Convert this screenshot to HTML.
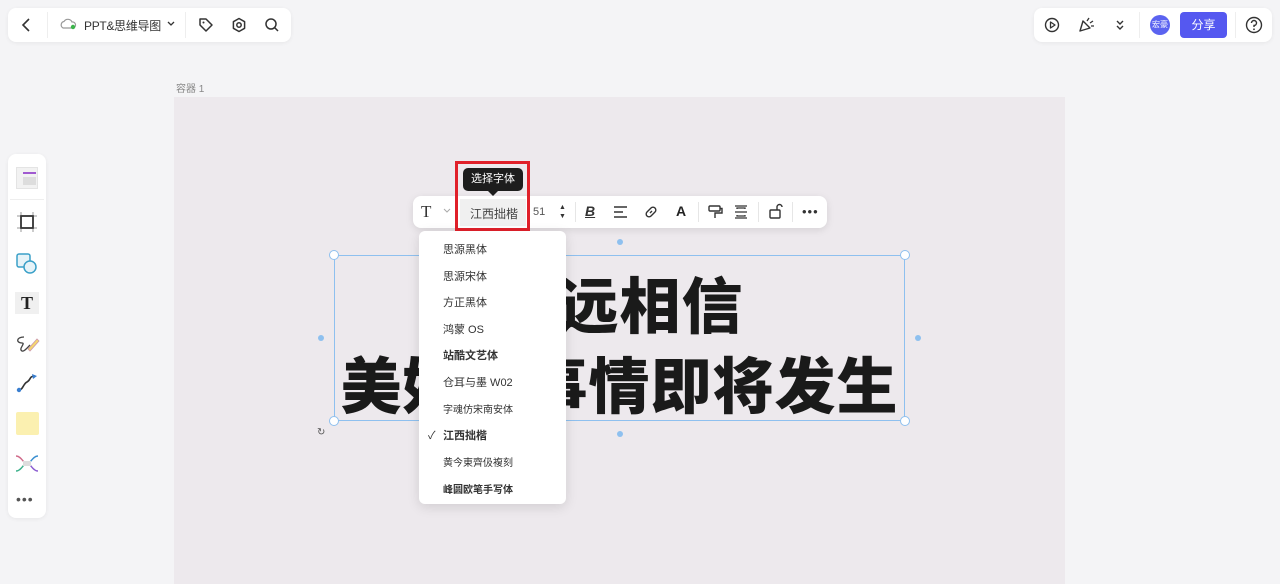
<!DOCTYPE html>
<html><head><meta charset="utf-8"><style>
*{box-sizing:border-box;margin:0;padding:0}
body{width:1280px;height:584px;overflow:hidden;background:#f4f4f6;font-family:"Liberation Sans","Noto Sans CJK SC",sans-serif;position:relative;color:#222}
.abs{position:absolute}
.bar{background:#fff;border-radius:8px;box-shadow:0 1px 4px rgba(0,0,0,.06)}
svg{display:block}
.menu div{position:absolute;left:24px;font-size:11px;color:#333}
</style></head><body>
<div class="abs bar" style="left:8px;top:8px;width:283px;height:34px"></div>
<svg class="abs" style="left:18px;top:16px" width="16" height="18"><path d="M11 3 L5 9 L11 15" fill="none" stroke="#333" stroke-width="1.6"/></svg>
<div class="abs" style="left:47px;top:12px;width:1px;height:26px;background:#eee"></div>
<svg class="abs" style="left:59px;top:17px" width="18" height="14"><path d="M4 11 A3.5 3.5 0 0 1 5 4.5 A4.5 4.5 0 0 1 13 5 A3 3 0 0 1 14 11 Z" fill="none" stroke="#999" stroke-width="1.2"/><circle cx="14" cy="10" r="2.2" fill="#3cb44b"/></svg>
<div class="abs" style="left:84px;top:17px;font-size:12px;color:#333;letter-spacing:-0.3px;white-space:nowrap">PPT&amp;思维导图</div>
<svg class="abs" style="left:166px;top:20px" width="10" height="8"><path d="M2 2 L5 5 L8 2" fill="none" stroke="#333" stroke-width="1.3"/></svg>
<div class="abs" style="left:185px;top:12px;width:1px;height:26px;background:#eee"></div>
<svg class="abs" style="left:198px;top:17px" width="16" height="16"><path d="M2 2 H8 L14 8 L8 14 L2 8 Z" fill="none" stroke="#333" stroke-width="1.5" stroke-linejoin="round"/><circle cx="5.5" cy="5.5" r="1" fill="#333"/></svg>
<svg class="abs" style="left:231px;top:17px" width="16" height="16"><path d="M8 1.5 L13.6 4.7 V11.3 L8 14.5 L2.4 11.3 V4.7 Z" fill="none" stroke="#333" stroke-width="1.5" stroke-linejoin="round"/><circle cx="8" cy="8" r="2.2" fill="none" stroke="#333" stroke-width="1.5"/></svg>
<svg class="abs" style="left:264px;top:17px" width="16" height="16"><circle cx="7" cy="7" r="5" fill="none" stroke="#333" stroke-width="1.5"/><path d="M10.5 10.5 L14 14" stroke="#333" stroke-width="1.5"/></svg>
<div class="abs bar" style="left:1034px;top:8px;width:238px;height:34px"></div>
<svg class="abs" style="left:1044px;top:17px" width="16" height="16"><circle cx="8" cy="8" r="6.5" fill="none" stroke="#333" stroke-width="1.4"/><path d="M6.5 5 L11 8 L6.5 11 Z" fill="none" stroke="#333" stroke-width="1.3" stroke-linejoin="round"/></svg>
<svg class="abs" style="left:1077px;top:16px" width="18" height="18"><path d="M3 15 L6 5 L13 12 Z" fill="none" stroke="#333" stroke-width="1.4" stroke-linejoin="round"/><path d="M10 5 L12 2 M13 7 L16 5 M14 10 L17 10" stroke="#333" stroke-width="1.3"/></svg>
<svg class="abs" style="left:1114px;top:18px" width="12" height="14"><path d="M3 3 L6 6 L9 3 M3 8 L6 11 L9 8" fill="none" stroke="#333" stroke-width="1.4"/></svg>
<div class="abs" style="left:1139px;top:12px;width:1px;height:26px;background:#eee"></div>
<div class="abs" style="left:1150px;top:15px;width:20px;height:20px;border-radius:50%;background:#5b63f0;color:#fff;font-size:8px;line-height:20px;text-align:center">宏豪</div>
<div class="abs" style="left:1180px;top:12px;width:47px;height:26px;border-radius:4px;background:#5558f0;color:#fff;font-size:12px;line-height:26px;text-align:center">分享</div>
<div class="abs" style="left:1235px;top:12px;width:1px;height:26px;background:#eee"></div>
<svg class="abs" style="left:1245px;top:16px" width="18" height="18"><circle cx="9" cy="9" r="7.5" fill="none" stroke="#333" stroke-width="1.4"/><path d="M6.5 7 A2.5 2.5 0 1 1 9 9.5 V11" fill="none" stroke="#333" stroke-width="1.4"/><circle cx="9" cy="13.3" r=".9" fill="#333"/></svg>
<div class="abs" style="left:176px;top:80px;font-size:10px;color:#888">容器 1</div>
<div class="abs" style="left:174px;top:97px;width:891px;height:487px;background:#ede9ed"></div>
<div class="abs bar" style="left:8px;top:154px;width:38px;height:364px"></div>
<div class="abs" style="left:16px;top:167px;width:22px;height:22px;background:#f2f2f2;border:1px solid #e4e4e4"></div>
<div class="abs" style="left:23px;top:172px;width:13px;height:2px;background:#a05ad0"></div>
<div class="abs" style="left:23px;top:177px;width:13px;height:8px;background:#ddd"></div>
<div class="abs" style="left:10px;top:199px;width:34px;height:1px;background:#eee"></div>
<svg class="abs" style="left:16px;top:211px" width="22" height="22"><rect x="5" y="5" width="12" height="12" fill="none" stroke="#333" stroke-width="1.8"/><path d="M5 1V4M17 1V4M5 18V21M17 18V21M1 5H4M1 17H4M18 5H21M18 17H21" stroke="#999"/></svg>
<svg class="abs" style="left:15px;top:252px" width="24" height="24"><rect x="2" y="2" width="13" height="13" rx="2" fill="#e6f3f8" stroke="#3aa0c8" stroke-width="1.5"/><circle cx="15" cy="15" r="6" fill="#e6f3f8" stroke="#3aa0c8" stroke-width="1.5"/></svg>
<div class="abs" style="left:15px;top:292px;width:24px;height:22px;background:#f0f0f0;font-family:'Liberation Serif',serif;font-size:18px;line-height:22px;text-align:center;font-weight:bold">T</div>
<svg class="abs" style="left:14px;top:333px" width="26" height="22"><path d="M10 4 C2 4 2 10 8 10 C12 10 4 16 8 18 C10 19 14 14 16 12" fill="none" stroke="#444" stroke-width="1.3"/><path d="M14 16 L23 6 L25 8 L16 18 Z" fill="#f5d76e" stroke="#c9a" stroke-width=".8"/></svg>
<svg class="abs" style="left:15px;top:372px" width="24" height="22"><path d="M4 18 C8 18 8 12 12 10 C16 8 14 4 20 4" fill="none" stroke="#333" stroke-width="1.6"/><circle cx="4" cy="18" r="2.2" fill="#3a7fd0"/><path d="M17 2 L22 4 L18 7 Z" fill="#3a7fd0"/></svg>
<div class="abs" style="left:16px;top:412px;width:23px;height:23px;background:#fbf0b0;border-radius:2px"></div>
<svg class="abs" style="left:14px;top:452px" width="26" height="22"><path d="M2 4 C6 4 8 8 10 10" fill="none" stroke="#d06a8a" stroke-width="1.4"/><path d="M24 4 C20 4 18 8 16 10" fill="none" stroke="#3a8fd0" stroke-width="1.4"/><path d="M2 19 C6 19 8 15 10 13" fill="none" stroke="#3ab08a" stroke-width="1.4"/><path d="M24 19 C20 19 18 15 16 13" fill="none" stroke="#8a5ad0" stroke-width="1.4"/><rect x="9" y="9" width="8" height="5" fill="#ddd"/></svg>
<div class="abs" style="left:16px;top:494px;font-size:14px;letter-spacing:1px;color:#555;line-height:10px">•••</div>
<div class="abs" style="left:334px;top:255px;width:571px;height:166px;border:1px solid #8ec0ef"></div>
<div class="abs" style="left:336px;top:262px;width:567px;font-family:'Noto Sans CJK SC',sans-serif;font-weight:900;font-size:61px;line-height:80px;text-align:center;color:#1a1a1a;letter-spacing:1px">永远相信<br>美好的事情即将发生</div>
<div class="abs" style="left:329px;top:250px;width:10px;height:10px;border-radius:50%;background:#fff;border:1px solid #8ec0ef"></div>
<div class="abs" style="left:900px;top:250px;width:10px;height:10px;border-radius:50%;background:#fff;border:1px solid #8ec0ef"></div>
<div class="abs" style="left:329px;top:416px;width:10px;height:10px;border-radius:50%;background:#fff;border:1px solid #8ec0ef"></div>
<div class="abs" style="left:900px;top:416px;width:10px;height:10px;border-radius:50%;background:#fff;border:1px solid #8ec0ef"></div>
<div class="abs" style="left:617px;top:239px;width:6px;height:6px;border-radius:50%;background:#8ec0ef"></div>
<div class="abs" style="left:617px;top:431px;width:6px;height:6px;border-radius:50%;background:#8ec0ef"></div>
<div class="abs" style="left:318px;top:335px;width:6px;height:6px;border-radius:50%;background:#8ec0ef"></div>
<div class="abs" style="left:915px;top:335px;width:6px;height:6px;border-radius:50%;background:#8ec0ef"></div>
<div class="abs" style="left:317px;top:427px;font-size:10px;color:#555">↻</div>
<div class="abs bar" style="left:413px;top:196px;width:414px;height:32px;box-shadow:0 2px 8px rgba(0,0,0,.1)"></div>
<div class="abs" style="left:421px;top:202px;font-family:'Liberation Serif',serif;font-size:17px;color:#333">T</div>
<svg class="abs" style="left:443px;top:208px" width="8" height="6"><path d="M1 1 L4 4 L7 1" fill="none" stroke="#aaa"/></svg>
<div class="abs" style="left:460px;top:199px;width:66px;height:27px;background:#f0f0f0"></div>
<div class="abs" style="left:470px;top:205px;font-size:12px;color:#444">江西拙楷</div>
<div class="abs" style="left:533px;top:206px;font-size:11px;color:#555">51</div>
<div class="abs" style="left:559px;top:203px;font-size:7px;line-height:9px;color:#333">▲<br>▼</div>
<div class="abs" style="left:575px;top:202px;width:1px;height:20px;background:#e6e6e6"></div>
<div class="abs" style="left:585px;top:203px;font-size:14px;font-weight:bold;font-style:italic;text-decoration:underline;color:#333">B</div>
<svg class="abs" style="left:613px;top:205px" width="16" height="14"><path d="M1 2H14M1 7H10M1 12H14" stroke="#333" stroke-width="1.5"/></svg>
<svg class="abs" style="left:643px;top:204px" width="16" height="16"><path d="M7 9 L9 7 M6 6 L8 4 A2.5 2.5 0 0 1 12 8 L10 10 M6 6 L4 8 A2.5 2.5 0 0 0 8 12 L10 10" fill="none" stroke="#333" stroke-width="1.4"/></svg>
<div class="abs" style="left:676px;top:203px;font-size:14px;font-weight:bold;color:#222">A</div>
<div class="abs" style="left:698px;top:202px;width:1px;height:20px;background:#e6e6e6"></div>
<svg class="abs" style="left:707px;top:204px" width="16" height="16"><rect x="2" y="2" width="11" height="5" rx="1" fill="none" stroke="#333" stroke-width="1.4"/><path d="M13 4.5H15V9H8V14" fill="none" stroke="#333" stroke-width="1.4"/></svg>
<svg class="abs" style="left:733px;top:204px" width="16" height="16"><path d="M2 2H14M2 14H14M2 8H14M4 5 L4 4 H12 V5 M4 11 V12 H12 V11" fill="none" stroke="#333" stroke-width="1.3"/></svg>
<div class="abs" style="left:758px;top:202px;width:1px;height:20px;background:#e6e6e6"></div>
<svg class="abs" style="left:768px;top:203px" width="16" height="16"><rect x="2" y="7" width="10" height="8" rx="1" fill="none" stroke="#333" stroke-width="1.4"/><path d="M9 7V4 A2.5 2.5 0 0 1 14 4" fill="none" stroke="#333" stroke-width="1.4"/></svg>
<div class="abs" style="left:792px;top:202px;width:1px;height:20px;background:#e6e6e6"></div>
<div class="abs" style="left:802px;top:205px;font-size:13px;letter-spacing:1px;color:#333;line-height:14px">•••</div>
<div class="abs" style="left:455px;top:161px;width:75px;height:70px;border:3px solid #e0202a"></div>
<div class="abs" style="left:463px;top:168px;width:60px;height:23px;background:#1d1d1d;border-radius:5px;color:#fff;font-size:11px;line-height:23px;text-align:center">选择字体</div>
<div class="abs" style="left:487px;top:190px;width:0;height:0;border-left:6px solid transparent;border-right:6px solid transparent;border-top:6px solid #1d1d1d"></div>
<div class="abs menu" style="left:419px;top:231px;width:147px;height:273px;background:#fff;border-radius:6px;box-shadow:0 3px 12px rgba(0,0,0,.12)">
<div style="top:10px">思源黑体</div>
<div style="top:37px">思源宋体</div>
<div style="top:63px">方正黑体</div>
<div style="top:90px">鸿蒙 OS</div>
<div style="top:116px;font-weight:bold">站酷文艺体</div>
<div style="top:143px">仓耳与墨 W02</div>
<div style="top:170px;font-size:10px">字魂仿宋南安体</div>
<div style="left:9px;top:196px;font-size:11px">✓</div>
<div style="top:196px;font-weight:bold">江西拙楷</div>
<div style="top:223px;font-size:10px">黄今東齊伋複刻</div>
<div style="top:250px;font-weight:bold;font-size:10px">峰圆欧笔手写体</div>
</div>
</body></html>
